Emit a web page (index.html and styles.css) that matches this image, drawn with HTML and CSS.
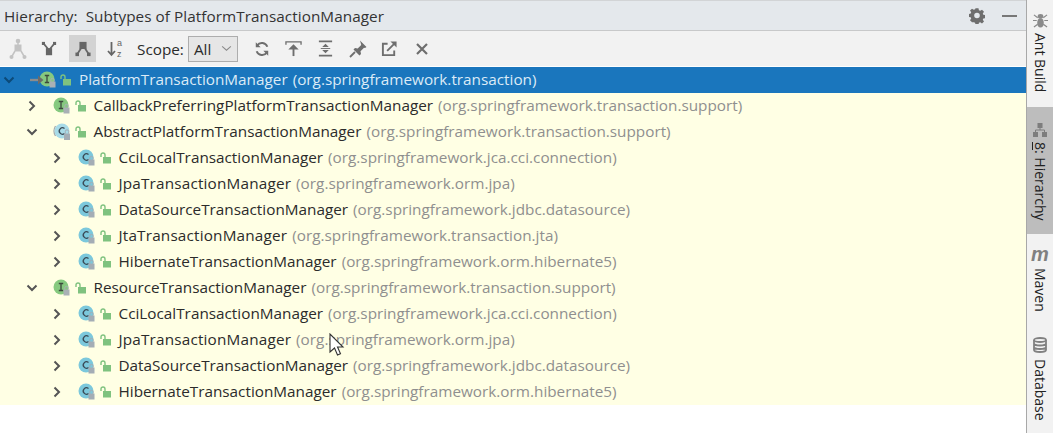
FILE: index.html
```html
<!DOCTYPE html>
<html lang="en">
<head>
<meta charset="utf-8">
<title>Hierarchy</title>
<link rel="stylesheet" href="styles.css">
</head>
<body>
<svg class="defs" width="0" height="0" aria-hidden="true">
  <symbol id="chev-r" viewBox="0 0 12 12"><path d="M3.5 1.5 8 6l-4.500 4.500" fill="none" stroke="currentColor" stroke-width="2"/></symbol>
  <symbol id="chev-d" viewBox="0 0 12 12"><path d="M1.500 3.500 6 8l4.500-4.500" fill="none" stroke="currentColor" stroke-width="2"/></symbol>
  <symbol id="unlock" viewBox="0 0 12 12"><rect x="3" y="5" width="8" height="6.500" fill="#7fc27f"/><path d="M1 5V3a2 2 0 0 1 4 0v2" fill="none" stroke="#7fc27f" stroke-width="1.400"/></symbol>
  <symbol id="ico-i" viewBox="0 0 18 18"><circle cx="8" cy="8" r="7.500" fill="#86c97f"/><path d="M5.800 4.500h4.400M5.800 11.500h4.400M8 4.500v7" stroke="#3c4a3c" stroke-width="1.300" fill="none"/><rect x="10.500" y="10.500" width="6" height="6" fill="#a9b0b5"/><path d="M11.800 10.500V9a1.700 1.700 0 0 1 3.400 0v1.500" stroke="#a9b0b5" fill="none"/></symbol>
  <symbol id="ico-c" viewBox="0 0 18 18"><circle cx="8" cy="8" r="7.500" fill="#7cc8dc"/><path d="M10.500 5.500a3.200 3.200 0 1 0 0 5" stroke="#3a4a55" stroke-width="1.300" fill="none"/><rect x="10.500" y="10.500" width="6" height="6" fill="#a4adb5"/><path d="M11.800 10.500V9a1.700 1.700 0 0 1 3.400 0v1.500" stroke="#a4adb5" fill="none"/></symbol>
  <symbol id="ico-a" viewBox="0 0 22 18"><path d="M3.500 3Q.5 8 3.500 13" stroke="#a5abae" stroke-width="1.300" fill="none"/><circle cx="10" cy="8" r="7.500" fill="#a8dbe8"/><path d="M12.500 5.500a3.200 3.200 0 1 0 0 5" stroke="#3a4a55" stroke-width="1.300" fill="none"/><rect x="12" y="10.500" width="6" height="6.500" fill="#a4adb5"/><path d="M13.300 10.500V8.500a1.700 1.700 0 0 1 3.400 0v2" stroke="#a4adb5" fill="none"/></symbol>
</svg>

<div class="app">
  <main class="main">
    <header class="title">
      <span class="title-text">Hierarchy:&nbsp; Subtypes of PlatformTransactionManager</span>
      <svg class="gear" viewBox="0 0 16 16" width="16" height="16"><path fill="#6e6e6e" fill-rule="evenodd" d="M6.500.5h3l.4 2.100 1.300.6L13 2l2 2.200-1.200 1.800.5 1.300 2.200.4v3l-2.200.4-.5 1.300 1.200 1.800-2 2-1.800-1.200-1.300.5-.4 2.200h-3l-.4-2.200-1.300-.5L3 15l-2-2 1.200-1.800-.5-1.300-2.200-.4v-3l2.200-.4.5-1.300L1 3 3 1l1.800 1.200 1.300-.6ZM8 5.200a2.800 2.800 0 1 0 0 5.600 2.800 2.800 0 0 0 0-5.600Z" transform="translate(0 -.3) scale(1 .97)"/></svg>
      <span class="minimize"></span>
    </header>

    <div class="toolbar">
      <span class="tool"><svg viewBox="0 0 20 22" width="20" height="22"><g fill="#c3c3c3"><circle cx="10" cy="3" r="2.300"/><rect x="6.500" y="6.500" width="7" height="7"/><circle cx="3.500" cy="19" r="2"/><circle cx="16.500" cy="19" r="2"/></g><path d="M10 3v5M7 13l-3.500 6M13 13l3.500 6" stroke="#c3c3c3" stroke-width="1.500"/></svg></span>
      <span class="tool tool-2"><svg viewBox="0 0 18 18" width="16" height="16"><g fill="#666"><rect x="5.500" y="8" width="7" height="8"/><rect x="1" y="1" width="3.500" height="3.500"/><rect x="13.500" y="1" width="3.500" height="3.500"/></g><path d="M3 3l5 6M15 3l-5 6" stroke="#666" stroke-width="2"/></svg></span>
      <span class="tool tool-on"><svg viewBox="0 0 18 18" width="16" height="16"><g fill="#666"><rect x="5" y="1" width="8" height="8"/><rect x="0.500" y="13" width="4" height="4"/><rect x="13.500" y="13" width="4" height="4"/></g><path d="M7 8l-4 6M11 8l4 6" stroke="#666" stroke-width="2"/></svg></span>
      <span class="tool sort"><svg viewBox="0 0 9 18" width="9" height="18"><path d="M4.500 2v13M1 11l3.500 4L8 11" fill="none" stroke="#666" stroke-width="1.800"/></svg><span class="az"><span>a</span><span>z</span></span></span>
      <span class="scope-label">Scope:</span>
      <span class="scope-box"><span>All</span><svg viewBox="0 0 12 8" width="11" height="7"><path d="M1 1.500 6 6l5-4.500" fill="none" stroke="#8a8a8a" stroke-width="1.200"/></svg></span>
      <span class="tool act"><svg viewBox="0 0 18 18" width="16" height="16"><path d="M15 6.500A6.500 6.500 0 0 0 3.500 5M3 11.500A6.500 6.500 0 0 0 14.500 13" fill="none" stroke="#6e6e6e" stroke-width="2.200"/><path d="M2 1.500v5.500h5.500zM16 16.500V11h-5.500z" fill="#6e6e6e"/></svg></span>
      <span class="tool act"><svg viewBox="0 0 18 18" width="17" height="17"><path d="M1 5V2h16v3" fill="none" stroke="#6e6e6e" stroke-width="1.400"/><path d="M9 17V7" stroke="#6e6e6e" stroke-width="2"/><path d="M3.500 10 9 4.500 14.500 10z" fill="#6e6e6e"/></svg></span>
      <span class="tool act"><svg viewBox="0 0 18 18" width="17" height="17"><path d="M2 1.500h14M2 16.500h14" stroke="#6e6e6e" stroke-width="1.800"/><path d="M9 4 5.500 7.500h7zM9 14l-3.500-3.500h7z" fill="#6e6e6e"/><path d="M4 9h10" stroke="#6e6e6e"/></svg></span>
      <span class="tool act"><svg viewBox="0 0 18 18" width="18" height="18"><path d="M11 .5 17.500 7l-1.500 1-1-.3-3.500 3.500.5 2.800-1.500 1.500-6-6L6 8l2.700.5 3.500-3.500L12 4Z" fill="#6e6e6e"/><path d="M6 12 1 17" stroke="#6e6e6e" stroke-width="1.800"/></svg></span>
      <span class="tool act"><svg viewBox="0 0 18 18" width="17" height="17"><path d="M7 4H2v12h12v-5" fill="none" stroke="#6e6e6e" stroke-width="2"/><path d="M6.500 11.500 15 3" stroke="#6e6e6e" stroke-width="2"/><path d="M10 1.500h6.500V8z" fill="#6e6e6e"/></svg></span>
      <span class="tool act"><svg viewBox="0 0 18 18" width="18" height="18"><path d="M4 4l10 10M14 4 4 14" stroke="#6e6e6e" stroke-width="2.200"/></svg></span>
    </div>

    <div class="tree">
      <div class="row row-sel">
        <svg class="chev chev-0"><use href="#chev-d"/></svg>
        <svg class="arrow" viewBox="0 0 14 10" width="14" height="10"><path d="M0 5h9" stroke="#8c8c8c" stroke-width="2.400"/><path d="M8 .5 13.500 5 8 9.500z" fill="#6b6b6b"/></svg>
        <svg class="ico ico-sel"><use href="#ico-i"/></svg>
        <svg class="lock lock-sel"><use href="#unlock"/></svg>
        <span class="name name-0">PlatformTransactionManager</span><span class="pkg">(org.springframework.transaction)</span>
      </div>
      <div class="row d1">
        <svg class="chev"><use href="#chev-r"/></svg><svg class="ico"><use href="#ico-i"/></svg><svg class="lock"><use href="#unlock"/></svg>
        <span class="name">CallbackPreferringPlatformTransactionManager</span><span class="pkg">(org.springframework.transaction.support)</span>
      </div>
      <div class="row d1">
        <svg class="chev"><use href="#chev-d"/></svg><svg class="ico ico-wide"><use href="#ico-a"/></svg><svg class="lock lock-tight"><use href="#unlock"/></svg>
        <span class="name">AbstractPlatformTransactionManager</span><span class="pkg">(org.springframework.transaction.support)</span>
      </div>
      <div class="row d2">
        <svg class="chev"><use href="#chev-r"/></svg><svg class="ico"><use href="#ico-c"/></svg><svg class="lock"><use href="#unlock"/></svg>
        <span class="name">CciLocalTransactionManager</span><span class="pkg">(org.springframework.jca.cci.connection)</span>
      </div>
      <div class="row d2">
        <svg class="chev"><use href="#chev-r"/></svg><svg class="ico"><use href="#ico-c"/></svg><svg class="lock"><use href="#unlock"/></svg>
        <span class="name name-j">JpaTransactionManager</span><span class="pkg">(org.springframework.orm.jpa)</span>
      </div>
      <div class="row d2">
        <svg class="chev"><use href="#chev-r"/></svg><svg class="ico"><use href="#ico-c"/></svg><svg class="lock"><use href="#unlock"/></svg>
        <span class="name">DataSourceTransactionManager</span><span class="pkg">(org.springframework.jdbc.datasource)</span>
      </div>
      <div class="row d2">
        <svg class="chev"><use href="#chev-r"/></svg><svg class="ico"><use href="#ico-c"/></svg><svg class="lock"><use href="#unlock"/></svg>
        <span class="name name-j">JtaTransactionManager</span><span class="pkg">(org.springframework.transaction.jta)</span>
      </div>
      <div class="row d2">
        <svg class="chev"><use href="#chev-r"/></svg><svg class="ico"><use href="#ico-c"/></svg><svg class="lock"><use href="#unlock"/></svg>
        <span class="name">HibernateTransactionManager</span><span class="pkg">(org.springframework.orm.hibernate5)</span>
      </div>
      <div class="row d1">
        <svg class="chev"><use href="#chev-d"/></svg><svg class="ico"><use href="#ico-i"/></svg><svg class="lock"><use href="#unlock"/></svg>
        <span class="name">ResourceTransactionManager</span><span class="pkg">(org.springframework.transaction.support)</span>
      </div>
      <div class="row d2">
        <svg class="chev"><use href="#chev-r"/></svg><svg class="ico"><use href="#ico-c"/></svg><svg class="lock"><use href="#unlock"/></svg>
        <span class="name">CciLocalTransactionManager</span><span class="pkg">(org.springframework.jca.cci.connection)</span>
      </div>
      <div class="row d2">
        <svg class="chev"><use href="#chev-r"/></svg><svg class="ico"><use href="#ico-c"/></svg><svg class="lock"><use href="#unlock"/></svg>
        <span class="name name-j">JpaTransactionManager</span><span class="pkg">(org.springframework.orm.jpa)</span>
      </div>
      <div class="row d2">
        <svg class="chev"><use href="#chev-r"/></svg><svg class="ico"><use href="#ico-c"/></svg><svg class="lock"><use href="#unlock"/></svg>
        <span class="name">DataSourceTransactionManager</span><span class="pkg">(org.springframework.jdbc.datasource)</span>
      </div>
      <div class="row d2">
        <svg class="chev"><use href="#chev-r"/></svg><svg class="ico"><use href="#ico-c"/></svg><svg class="lock"><use href="#unlock"/></svg>
        <span class="name">HibernateTransactionManager</span><span class="pkg">(org.springframework.orm.hibernate5)</span>
      </div>
      <svg class="cursor" viewBox="0 0 16 24" width="16" height="24"><path d="M1 1v18l4.500-4 3 7 3-1.300-3-6.700H14Z" fill="#fff" stroke="#333" stroke-width="1.100"/></svg>
    </div>
  </main>

  <aside class="strip">
    <div class="side side-ant">
      <svg viewBox="0 0 16 16" width="15" height="15"><g fill="#8a8a8a"><ellipse cx="8" cy="3.500" rx="3" ry="2.500"/><ellipse cx="8" cy="10.500" rx="3.500" ry="5"/></g><path d="M1 2l4 3M15 2l-4 3M0 8h4M16 8h-4M1 15l4-3M15 15l-4-3" stroke="#8a8a8a" stroke-width="1.300"/></svg>
      <span class="vtext">Ant Build</span>
    </div>
    <div class="side side-hier">
      <svg viewBox="0 0 14 14" width="14" height="14"><g fill="#7d7d7d"><rect x="4.500" y="0" width="5" height="5"/><rect x="0" y="9" width="5" height="5"/><rect x="9" y="9" width="5" height="5"/></g><path d="M7 5v2M2.500 9V7h9v2" fill="none" stroke="#7d7d7d"/></svg>
      <span class="vtext"><u>8</u>: Hierarchy</span>
    </div>
    <div class="side side-maven">
      <span class="m-icon">m</span>
      <span class="vtext">Maven</span>
    </div>
    <div class="side side-db">
      <svg viewBox="0 0 14 16" width="14" height="16"><g fill="none" stroke="#808080" stroke-width="1.800"><ellipse cx="7" cy="3" rx="6" ry="2"/><path d="M1 3v10c0 1 2.500 2 6 2s6-1 6-2V3M1 6.500c0 1 2.500 2 6 2s6-1 6-2M1 10c0 1 2.500 2 6 2s6-1 6-2"/></g></svg>
      <span class="vtext">Database</span>
    </div>
  </aside>
</div>
</body>
</html>
```

FILE: styles.css
```css
* { box-sizing: border-box; }
html, body { margin: 0; height: 100%; background: #fff; overflow: hidden; }
body { font-family: "Open Sans", "Liberation Sans", sans-serif; color: #2b2b2b; }
.defs { position: absolute; }
.app { display: flex; width: 1053px; height: 433px; }
.main { flex: none; width: 1026px; display: flex; flex-direction: column; }

.title { flex: none; height: 31px; display: flex; align-items: center; padding-left: 4px; background: #e4e8ec; border-top: 1px solid #d2d4d6; border-bottom: 1px solid #c8c9ca; font-size: 15.300px; color: #333; }
.title-text { flex: 1; letter-spacing: .05px; }
.gear { flex: none; margin-right: 17px; }
.minimize { flex: none; width: 15px; height: 2px; background: #777; margin-right: 9px; }

.toolbar { flex: none; height: 35px; display: flex; align-items: center; background: #f2f2f2; padding-left: 4px; }
.tool { flex: none; width: 27px; height: 27px; display: flex; align-items: center; justify-content: center; }
.tool-2 { margin-left: 4px; margin-right: 7px; }
.tool-on { background: #d3d3d3; }
.sort { margin-left: 5px; gap: 1px; }
.az { display: flex; flex-direction: column; font-family: "Liberation Sans", sans-serif; font-size: 9px; line-height: 10.400px; color: #666; }
.scope-label { font-size: 15.300px; margin-left: 9px; color: #2b2b2b; }
.scope-box { flex: none; display: flex; align-items: center; justify-content: space-between; width: 50px; height: 26px; margin-left: 4px; margin-right: 8px; padding: 0 5px 0 5px; border: 1px solid #adadad; background: #e6e6e6; font-size: 15.300px; }
.act { width: 32px; }

.tree { position: relative; height: 338px; margin-top: 1px; background: #ffffe4; }
.row { height: 26px; display: flex; align-items: center; font-size: 15.300px; white-space: nowrap; }
.row-sel { background: #1a76bd; color: #dcebf7; padding-left: 3px; }
.d1 { padding-left: 26px; }
.d2 { padding-left: 51px; }
.chev { flex: none; width: 12px; height: 12px; color: #555; }
.chev-0 { color: #0c4a78; }
.arrow { flex: none; margin-left: 15px; position: relative; z-index: 1; }
.ico { flex: none; width: 18px; height: 18px; margin-left: 15px; }
.ico-sel { margin-left: -5px; }
.ico-wide { width: 22px; margin-left: 14px; }
.lock { flex: none; width: 12px; height: 12px; margin-left: 4px; }
.lock-sel { margin-left: 3px; }
.lock-tight { margin-left: 1px; }
.name { margin-left: 6.500px; margin-bottom: 2px; }
.name-0 { margin-left: 7px; }
.name-j { letter-spacing: .18px; }
.pkg { margin-left: 5px; margin-bottom: 2px; color: #8f8f8f; }
.row-sel .pkg { color: #dcebf7; }
.cursor { position: absolute; left: 329px; top: 266px; }

.strip { flex: none; width: 27px; background: #f2f2f2; border-left: 1px solid #a8a8a8; display: flex; flex-direction: column; align-items: stretch; font-size: 14px; }
.side { display: flex; flex-direction: column; align-items: center; }
.vtext { writing-mode: vertical-rl; color: #222; line-height: 1; white-space: nowrap; }
.side-ant { height: 107px; padding-top: 13px; gap: 5px; }
.side-hier { height: 127px; background: #bdbdbd; padding-top: 16px; gap: 5px; }
.side-maven { height: 103px; padding-top: 10px; gap: 4px; }
.side-db { gap: 6px; }
.m-icon { font: italic bold 20px/20px "Liberation Sans", sans-serif; color: #808080; height: 20px; }
```
